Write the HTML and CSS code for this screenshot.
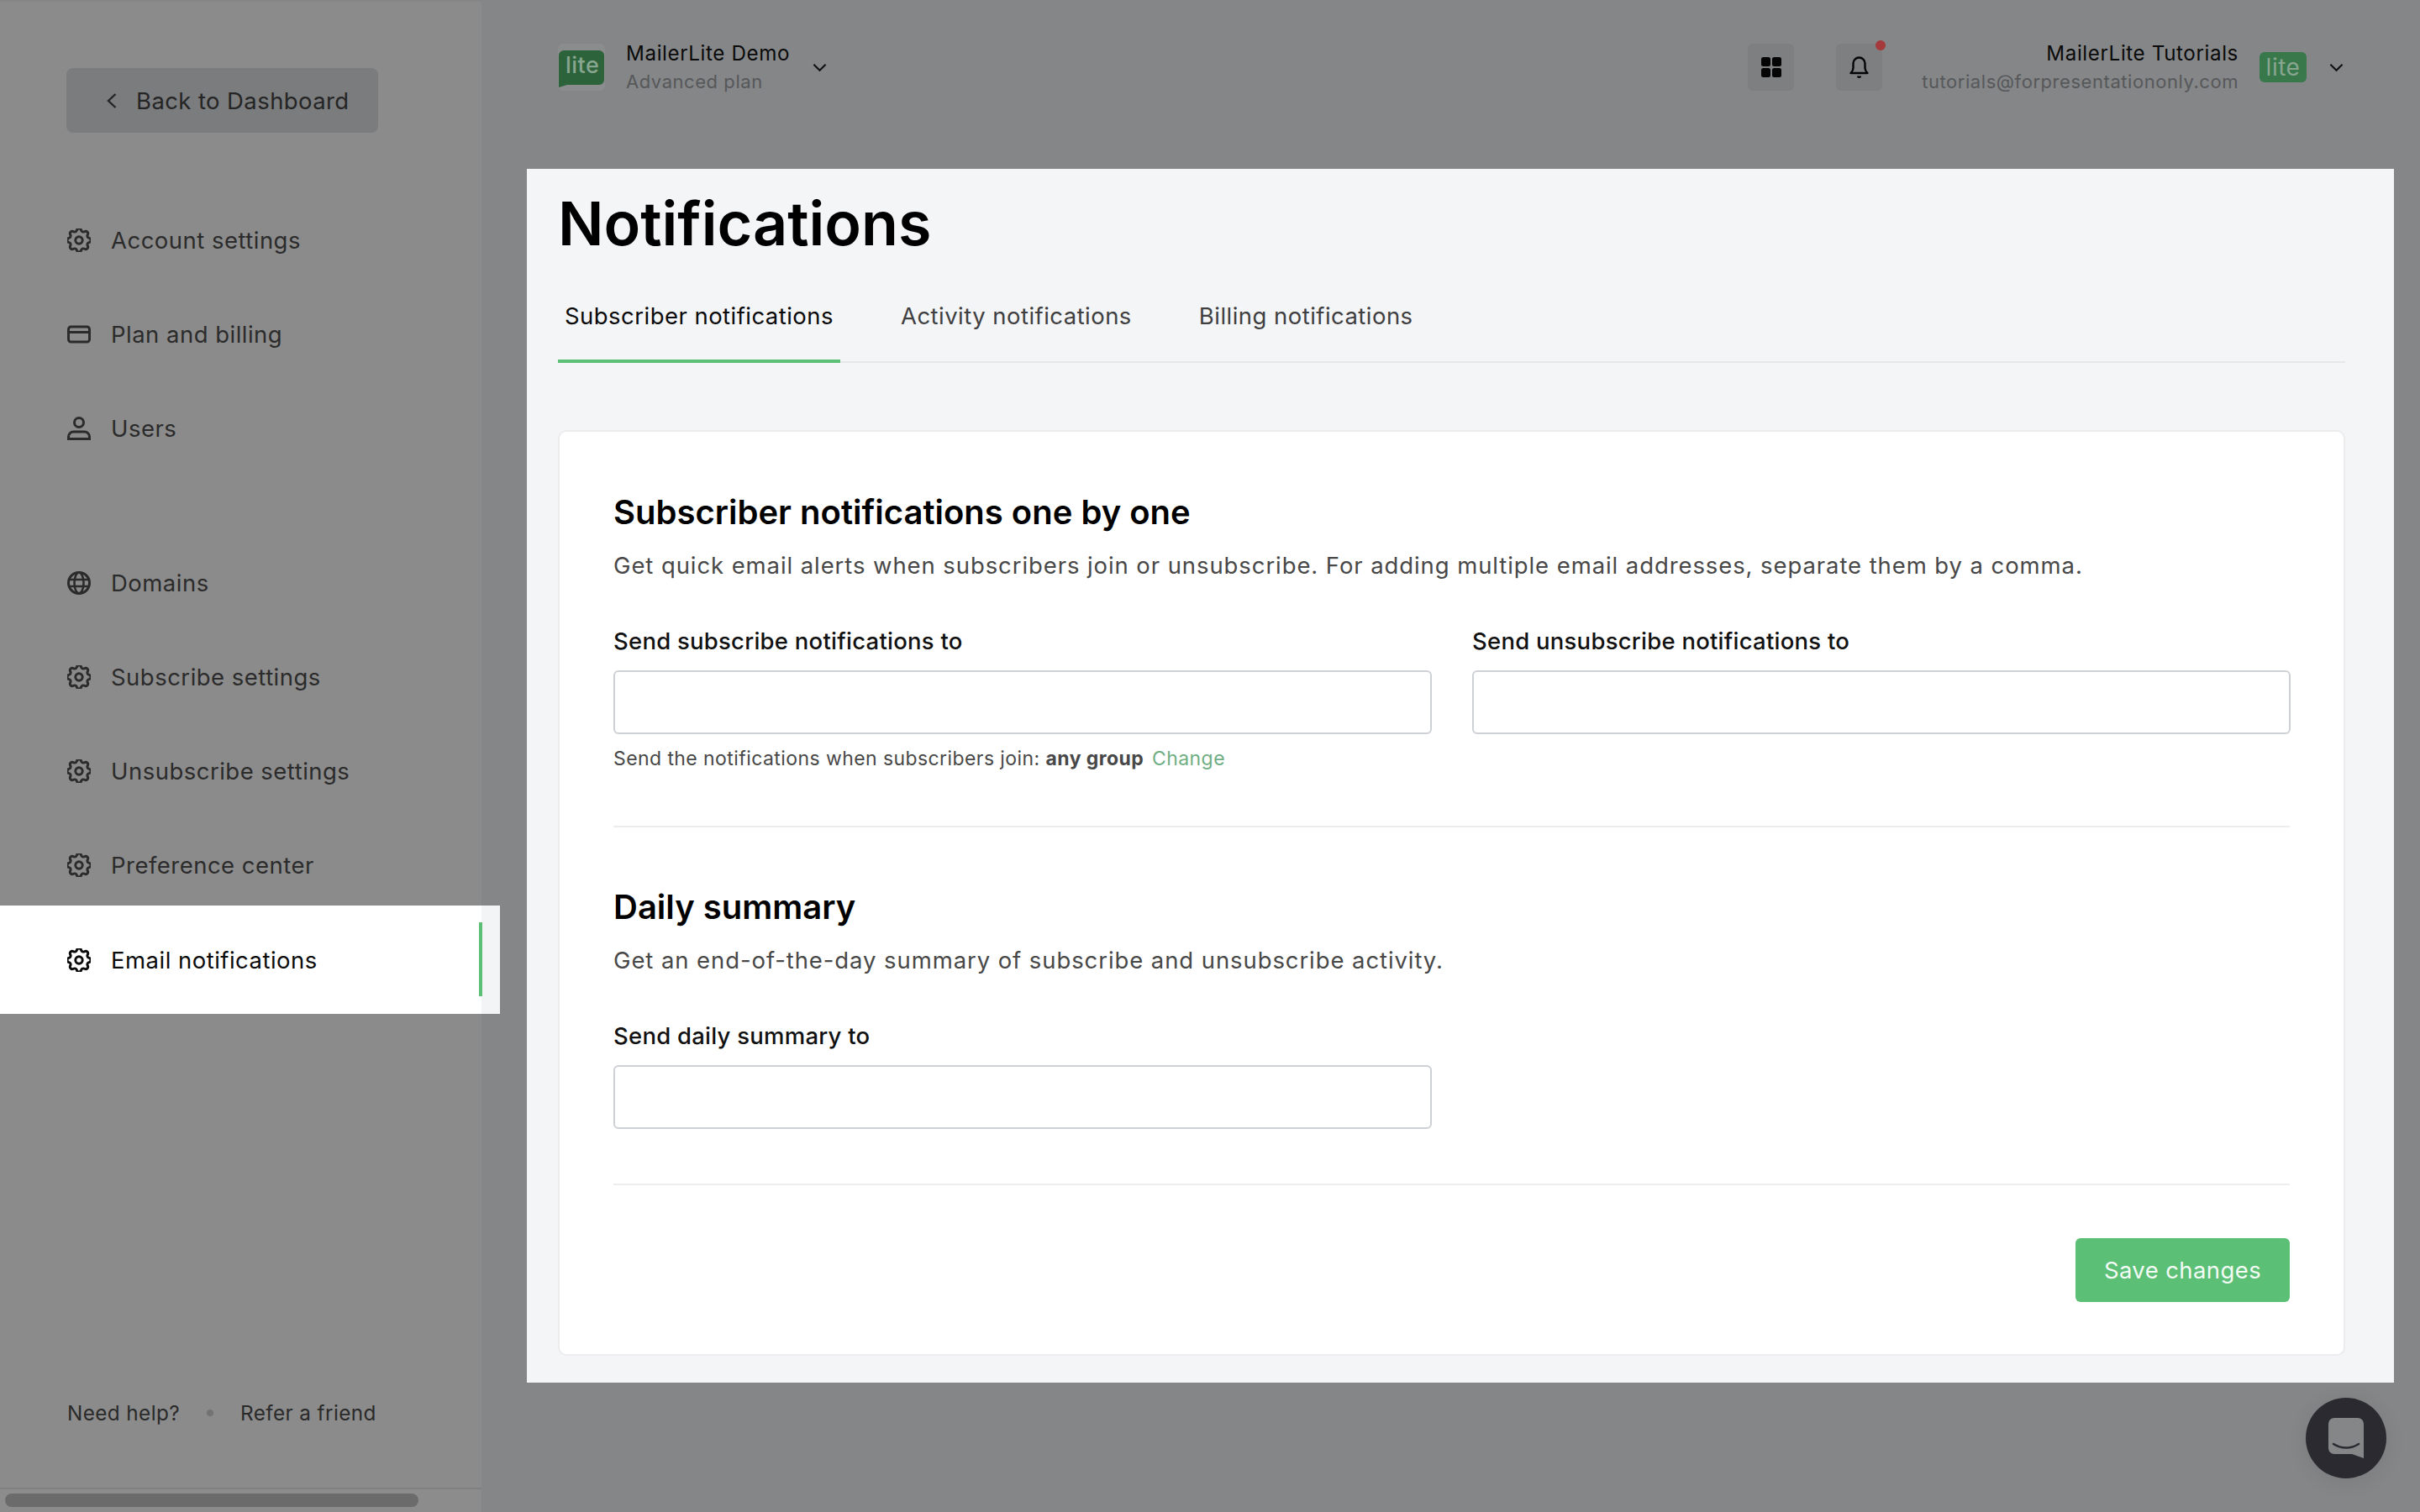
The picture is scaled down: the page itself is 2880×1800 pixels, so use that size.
FILE: index.html
```html
<!DOCTYPE html>
<html lang="en">
<head>
<meta charset="utf-8">
<title>Notifications</title>
<link rel="stylesheet" href="styles.css">
</head>
<body>
<svg class="defs" width="0" height="0" aria-hidden="true">
  <symbol id="gear" viewBox="3 3 18 18"><path d="M10.325 4.317c.426-1.756 2.924-1.756 3.35 0a1.724 1.724 0 0 0 2.573 1.066c1.543-.94 3.31.826 2.37 2.37a1.724 1.724 0 0 0 1.065 2.572c1.756.426 1.756 2.924 0 3.35a1.724 1.724 0 0 0-1.066 2.573c.94 1.543-.826 3.31-2.37 2.37a1.724 1.724 0 0 0-2.572 1.065c-.426 1.756-2.924 1.756-3.35 0a1.724 1.724 0 0 0-2.573-1.066c-1.543.94-3.31-.826-2.37-2.37a1.724 1.724 0 0 0-1.065-2.572c-1.756-.426-1.756-2.924 0-3.35a1.724 1.724 0 0 0 1.066-2.573c-.94-1.543.826-3.31 2.37-2.37 1 .608 2.296.07 2.572-1.065z" fill="none" stroke="currentColor" stroke-width="1.9"/><circle cx="12" cy="12" r="2.7" fill="none" stroke="currentColor" stroke-width="1.9"/></symbol>
  <symbol id="chev" viewBox="0 0 18 11"><path d="M1.5 1.5 9 9l7.5-7.5" fill="none" stroke="currentColor" stroke-width="2.2"/></symbol>
</svg>
<div class="app">
  <aside class="sidebar">
    <a class="back">
      <svg class="back-icon" viewBox="0 0 12 18"><path d="M10.5 1 2 9l8.500 8" fill="none" stroke="currentColor" stroke-width="2.4"/></svg>
      <span>Back to Dashboard</span>
    </a>
    <nav class="nav">
      <a class="nav-item"><svg class="ico"><use href="#gear"/></svg><span>Account settings</span></a>
      <a class="nav-item"><svg class="ico" viewBox="0 0 28 28"><rect x="1.500" y="5" width="25" height="18" rx="3" fill="none" stroke="currentColor" stroke-width="3"/><path d="M1.500 11.500h25" stroke="currentColor" stroke-width="3"/></svg><span>Plan and billing</span></a>
      <a class="nav-item"><svg class="ico" viewBox="0 0 28 28"><circle cx="14" cy="7" r="5.500" fill="none" stroke="currentColor" stroke-width="3"/><path d="M1.500 27v-3a6 6 0 0 1 6-6h13a6 6 0 0 1 6 6v3zM0 26.500h28" fill="none" stroke="currentColor" stroke-width="3"/></svg><span>Users</span></a>
    </nav>
    <nav class="nav nav-second">
      <a class="nav-item"><svg class="ico" viewBox="0 0 28 28"><circle cx="14" cy="14" r="12.500" fill="none" stroke="currentColor" stroke-width="3"/><ellipse cx="14" cy="14" rx="5.500" ry="12.500" fill="none" stroke="currentColor" stroke-width="2.600"/><path d="M2 10h24M2 18h24" stroke="currentColor" stroke-width="2.600"/></svg><span>Domains</span></a>
      <a class="nav-item"><svg class="ico"><use href="#gear"/></svg><span>Subscribe settings</span></a>
      <a class="nav-item"><svg class="ico"><use href="#gear"/></svg><span>Unsubscribe settings</span></a>
      <a class="nav-item"><svg class="ico"><use href="#gear"/></svg><span>Preference center</span></a>
      <a class="nav-item is-active"><svg class="ico"><use href="#gear"/></svg><span>Email notifications</span><i class="active-edge"></i></a>
    </nav>
    <div class="side-foot">
      <a>Need help?</a><i class="dot"></i><a>Refer a friend</a>
    </div>
    <div class="scroll-track"><div class="scroll-thumb"></div></div>
  </aside>
  <main class="main">
    <header class="topbar">
      <div class="account">
        <div class="logo-tile">
          <svg class="logo-bubble" viewBox="0 0 54 44"><path d="M6 0h42a6 6 0 0 1 6 6v29a6 6 0 0 1-6 6H10L0 44V6a6 6 0 0 1 6-6z" fill="#2c633b"/></svg>
          <span class="logo-text">lite</span>
        </div>
        <div class="account-text">
          <div class="title-line">MailerLite Demo</div>
          <div class="sub-line">Advanced plan</div>
        </div>
        <svg class="chev chev-left"><use href="#chev"/></svg>
      </div>
      <div class="top-right">
        <button class="tile"><svg class="tile-grid" viewBox="0 0 24 24"><rect x="0" y="0" width="11" height="11" rx="2.500"/><rect x="13" y="0" width="11" height="11" rx="2.500"/><rect x="0" y="13" width="11" height="11" rx="2.500"/><rect x="13" y="13" width="11" height="11" rx="2.500"/></svg></button>
        <button class="tile tile-bell"><svg class="tile-bell-icon" viewBox="0 0 24 28"><path d="M2 21c2-2 3-3 3-6V9.500a7 7 0 0 1 14 0V15c0 3 1 4 3 6z" fill="none" stroke="currentColor" stroke-width="2.400" stroke-linejoin="round"/><path d="M9.500 24.500a2.500 2.500 0 0 0 5 0z" fill="currentColor"/></svg><i class="red-dot"></i></button>
        <div class="user-text">
          <div class="title-line">MailerLite Tutorials</div>
          <div class="sub-line">tutorials@forpresentationonly.com</div>
        </div>
        <div class="lite-badge">lite</div>
        <svg class="chev"><use href="#chev"/></svg>
      </div>
    </header>
    <section class="panel">
      <h1 class="page-title">Notifications</h1>
      <div class="tabs">
        <a class="tab is-current">Subscriber notifications</a>
        <a class="tab">Activity notifications</a>
        <a class="tab">Billing notifications</a>
      </div>
      <div class="card">
        <h2 class="card-title">Subscriber notifications one by one</h2>
        <p class="card-desc">Get quick email alerts when subscribers join or unsubscribe. For adding multiple email addresses, separate them by a comma.</p>
        <div class="field-grid">
          <div class="field">
            <label class="field-label">Send subscribe notifications to</label>
            <input class="field-input" type="text">
            <p class="hint">Send the notifications when subscribers join: <b>any group</b> <a class="hint-link">Change</a></p>
          </div>
          <div class="field">
            <label class="field-label">Send unsubscribe notifications to</label>
            <input class="field-input" type="text">
          </div>
        </div>
        <hr class="rule rule-one">
        <h2 class="card-title">Daily summary</h2>
        <p class="card-desc">Get an end-of-the-day summary of subscribe and unsubscribe activity.</p>
        <div class="field-grid">
          <div class="field">
            <label class="field-label">Send daily summary to</label>
            <input class="field-input" type="text">
          </div>
        </div>
        <hr class="rule rule-two">
        <div class="actions"><button class="save">Save changes</button></div>
      </div>
    </section>
  </main>
</div>
<button class="chat" aria-label="Chat">
  <svg class="chat-icon" viewBox="0 0 42 48"><path d="M7 0h28a7 7 0 0 1 7 7v41l-14-5H7a7 7 0 0 1-7-7V7a7 7 0 0 1 7-7z" fill="#858688"/><path d="M6 31c9 6 21 6 30 0" fill="none" stroke="#2a2a30" stroke-width="2.600" stroke-linecap="round"/></svg>
</button>
</body>
</html>
```
FILE: styles.css
```css
* { box-sizing: border-box; }
html, body { margin: 0; padding: 0; height: 100%; }
body {
  width: 2880px; height: 1800px; overflow: hidden; position: relative;
  background: #858688; color: #2a2a2a;
  font-family: Inter, "Liberation Sans", sans-serif;
}
.defs { position: absolute; }
.app { display: flex; height: 1800px; }

/* sidebar */
.sidebar {
  position: relative; flex: 0 0 573px; min-width: 0; width: 573px; height: 1800px;
  background: #8b8b8b; border-top: 2px solid #858585;
  padding-top: 79px; display: flex; flex-direction: column;
}
.back {
  margin-left: 79px; width: 371px; height: 77px; border-radius: 8px;
  background: #7b7c7e; display: flex; align-items: center; padding-left: 48px;
  font-size: 27.500px; letter-spacing: .4px; font-weight: 400; color: #252525;
}
.back-icon { width: 12px; height: 18px; margin-right: 23px; }
.nav { display: flex; flex-direction: column; margin-top: 72px; }
.nav-second { margin-top: 72px; }
.nav-item {
  position: relative; height: 112px; display: flex; align-items: center;
  padding-left: 80px; gap: 24px; font-size: 27.500px; letter-spacing: .48px; color: #2b2b2b;
}
.ico { width: 28px; height: 28px; flex: none; }
.nav-item.is-active {
  z-index: 2; width: 595px; background: linear-gradient(90deg, #fff 573px, #f3f4f6 573px);
  color: #0b0b0b; height: 129px; margin-top: -8px; margin-bottom: -9px;
}
.active-edge { position: absolute; left: 570px; top: 20px; width: 4px; height: 88px; background: #5cbf76; }
.side-foot {
  position: absolute; left: 80px; top: 1665px; display: flex; align-items: center;
  font-size: 24.300px; letter-spacing: .4px; color: #2a2a2a; height: 30px;
}
.dot { width: 8px; height: 8px; border-radius: 50%; background: #737373; margin: 0 32px; }
.scroll-track { position: absolute; left: 0; right: 0; top: 1769px; bottom: 0; border-top: 2px solid #808080; background: #8c8c8c; }
.scroll-thumb { position: absolute; left: 6px; top: 5px; width: 492px; height: 16px; border-radius: 8px; background: #6b6b6b; }

/* top bar */
.main { flex: 1; min-width: 0; display: flex; flex-direction: column; }
.topbar {
  height: 201px; padding: 52px 0 0 91px; width: 2216px;
  display: flex; justify-content: space-between; align-items: flex-start; flex: none;
}
.account, .top-right { display: flex; align-items: center; height: 56px; }
.logo-tile { position: relative; width: 56px; height: 56px; border-radius: 6px; background: #8b8c8d; margin-right: 25px; }
.logo-bubble { position: absolute; left: 1px; top: 8px; width: 54px; height: 44px; }
.logo-text { position: absolute; left: 9px; top: 4px; font-size: 27px; font-weight: 500; letter-spacing: .5px; color: #88a590; line-height: 44px; }
.title-line { font-size: 24.200px; line-height: 34px; color: #0a0a0a; letter-spacing: .6px; white-space: nowrap; }
.sub-line { font-size: 22px; line-height: 33px; color: #56585a; letter-spacing: .55px; white-space: nowrap; }
.chev { width: 17px; height: 11px; color: #111; flex: none; }
.chev-left { margin-left: 27px; }
.tile { position: relative; width: 55px; height: 56px; border: 0; padding: 0; border-radius: 6px; background: #7e7f80; display: flex; align-items: center; justify-content: center; color: #050505; }
.tile-bell { margin-left: 50px; margin-right: 47px; }
.tile-grid { width: 24px; height: 24px; fill: #050505; }
.tile-bell-icon { width: 25px; height: 28px; }
.red-dot { position: absolute; right: -4px; top: -4px; width: 12px; height: 12px; border-radius: 50%; background: #a5393b; }
.user-text { text-align: right; margin-right: 25px; }
.lite-badge { width: 56px; height: 36px; border-radius: 6px; background: #38784b; color: #88a590; font-size: 28px; letter-spacing: .5px; text-align: center; line-height: 36px; margin-right: 27px; }

/* panel */
.panel {
  margin-left: 54px; width: 2222px; height: 1445px; background: #f4f5f7;
  padding: 0 58px 0 37px; flex: none;
}
.page-title { margin: 0; font-size: 71.800px; line-height: 88px; font-weight: 600; color: #000; height: 137px; padding-top: 21px; }
.tabs { display: flex; gap: 64px; border-bottom: 2px solid #e6e7e9; height: 94px; }
.tab { padding: 0 8px; height: 94px; line-height: 76px; font-size: 27.500px; letter-spacing: .46px; color: #3f3f41; }
.tab.is-current { color: #0a0a0a; border-bottom: 4px solid #5cbf76; }
.card {
  margin-top: 80px; height: 1102px; background: #fff; border: 2px solid #ececee; border-radius: 10px;
  padding: 71px 64px 0 64px;
}
.card-title { margin: 0; font-size: 40px; line-height: 50px; font-weight: 600; color: #000; }
.card-desc { margin: 16px 0 0; font-size: 27.500px; line-height: 44px; color: #484848; letter-spacing: .91px; }
.field-grid { display: grid; grid-template-columns: 974px 974px; column-gap: 48px; margin-top: 48px; }
.field { display: flex; flex-direction: column; }
.field-label { font-size: 27.500px; letter-spacing: .24px; line-height: 40px; color: #111; font-weight: 500; }
.field-input { margin-top: 15px; height: 76px; width: 100%; background: #fff; border: 2px solid #cdd0d4; border-radius: 6px; }
.hint { margin: 12px 0 0; font-size: 23px; letter-spacing: .42px; line-height: 34px; color: #484848; }
.hint b { font-weight: 700; }
.hint-link { color: #6fae83; margin-left: 3px; }
.rule { margin: 0; border: 0; border-top: 2px solid #eceded; }
.rule-one { margin-top: 63px; margin-bottom: 70px; }
.rule-two { margin-top: 65px; }
.actions { display: flex; justify-content: flex-end; margin-top: 63px; }
.save { height: 76px; width: 255px; border: 0; border-radius: 6px; background: #5cbf76; color: #f3fbf5; font: 400 27.500px Inter, "Liberation Sans", sans-serif; letter-spacing: .4px; }

.chat { position: absolute; left: 2744px; top: 1664px; width: 96px; height: 96px; border: 0; padding: 0; border-radius: 50%; background: #2a2a30; box-shadow: 0 4px 24px rgba(0,0,0,.08); display: flex; align-items: center; justify-content: center; }
.chat-icon { width: 42px; height: 48px; }
```
